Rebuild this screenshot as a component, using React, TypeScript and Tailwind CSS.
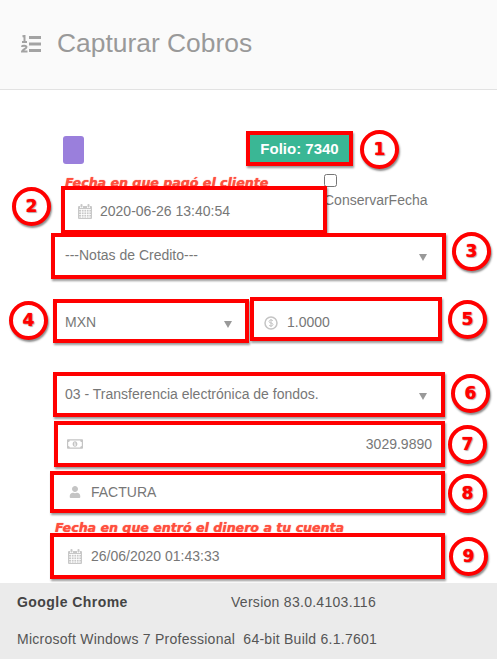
import React from 'react';
import { FaUser, FaRegMoneyBillAlt } from 'react-icons/fa';

const ListOlIcon = () => (
    <svg width="20" height="18" viewBox="0 0 20 18" className="shrink-0 text-[#a3a3a3]" fill="none" stroke="currentColor">
        <path d="M8 2.500h12M8 9h12M8 15.500h12" strokeWidth="3" />
        <path d="M1.500 1.500 3.500 .8v6M1 7h5" strokeWidth="2" />
        <path d="M.8 11.800c.3-1.500 4.700-1.500 4.700.3 0 1.700-4.500 2.300-4.500 4.400h5.500" strokeWidth="2" />
    </svg>
);

const CalendarIcon = () => (
    <svg width="14" height="15" viewBox="0 0 14 15" className="shrink-0 text-[#c8c8c8]" fill="currentColor">
        <rect x="2.500" y="0" width="2" height="3.500" rx="0.800" />
        <rect x="9.500" y="0" width="2" height="3.500" rx="0.800" />
        <path d="M1 2h1v2h3V2h4v2h3V2h1a1 1 0 0 1 1 1v11a1 1 0 0 1-1 1H1a1 1 0 0 1-1-1V3a1 1 0 0 1 1-1z" />
        <path d="M1 5.500h12M1 8h12M1 10.500h12M1 13h12M3.500 5v9M6 5v9M8.500 5v9M11 5v9" stroke="#fff" strokeWidth="0.800" fill="none" />
    </svg>
);

const DollarIcon = () => (
    <svg width="14" height="14" viewBox="0 0 14 14" className="shrink-0 text-[#c4c4c4]" fill="none" stroke="currentColor">
        <circle cx="7" cy="7" r="6" strokeWidth="1.500" />
        <path d="M9 5c-.4-.8-1.100-1-2-1-1.200 0-2 .6-2 1.500C5 7.800 9 6.200 9 8.500 9 9.400 8.200 10 7 10c-.9 0-1.700-.3-2-1M7 3v8" strokeWidth="1" />
    </svg>
);

const Arrow = () => <span className="ml-auto mt-[3px] h-0 w-0 border-x-[4px] border-t-[7px] border-x-transparent border-t-[#999]" />;

const Badge = ({ n, className }: { n: number; className: string }) => (
    <span className={`absolute flex h-[39px] w-[39px] items-center justify-center rounded-full border-[4px] border-[#ff0000] bg-white font-['DejaVu_Sans',sans-serif] text-[17px] font-bold text-[#ff0000] shadow-[1px_2px_2px_rgba(0,0,0,0.45)] [text-shadow:0_0_1px_#ff0000,1px_1px_1px_rgba(0,0,0,0.3)] ${className}`}>
        {n}
    </span>
);

const Box = ({ className, children }: { className: string; children?: React.ReactNode }) => (
    <div className={`relative flex items-center border-[4px] border-[#ff0000] bg-white text-[14px] text-[#777] shadow-[1px_2px_2px_rgba(0,0,0,0.4)] ${className}`}>
        {children}
    </div>
);

const RedNote = ({ children, className }: { children: React.ReactNode; className: string }) => (
    <p className={`whitespace-nowrap font-['DejaVu_Sans',sans-serif] text-[12.600px] font-bold italic leading-[13px] text-[#ff4f3f] [text-shadow:0_0_1px_#ff4f3f] ${className}`}>{children}</p>
);

export default function App() {
    return (
        <div className="h-[659px] w-[497px] overflow-hidden bg-white font-['Liberation_Sans',sans-serif]">
            <header className="flex h-[90px] items-center border-b border-[#e2e2e2] bg-[#fafafa] pb-[2px] pl-[21px]">
                <ListOlIcon />
                <h1 className="ml-[16px] text-[26.400px] text-[#999]">Capturar Cobros</h1>
            </header>

            <div className="mt-[41px] flex pl-[63px]">
                <span className="mt-[5px] h-[28px] w-[21px] rounded-[3px] bg-[#9a7fdc]" />
                <Box className="ml-[162px] h-[35px] w-[107px] justify-center !bg-[#3ab795] pt-[2px]">
                    <span className="text-[15px] font-bold text-white">Folio: 7340</span>
                    <Badge n={1} className="left-[110px] top-[-5px]" />
                </Box>
            </div>

            <div className="flex items-start">
                <div className="ml-[61px] w-[266px]">
                    <RedNote className="mt-[10px] ml-[4px] h-[10px]">Fecha en que pagó el cliente</RedNote>
                    <Box className="h-[48px] pl-[13px] pt-[3px]">
                        <CalendarIcon />
                        <span className="ml-[8px]">2020-06-26 13:40:54</span>
                        <Badge n={2} className="left-[-53px] top-[-3px]" />
                    </Box>
                </div>
                <div className="ml-[-3px] mt-[8px] text-[14px] text-[#777]">
                    <input type="checkbox" className="block h-[13px] w-[13px]" />
                    <span className="mt-[3px] block">ConservarFecha</span>
                </div>
            </div>

            <Box className="ml-[51px] mt-[-1px] h-[46px] w-[395px] pb-[1px] pl-[10px] pr-[15px]">
                <span>---Notas de Credito---</span>
                <Arrow />
                <Badge n={3} className="left-[397px] top-[-5px]" />
            </Box>

            <div className="mt-[18px] flex items-start pl-[53px]">
                <Box className="mt-[2px] h-[44px] w-[196px] pl-[8px] pr-[13px] pt-[3px]">
                    <span>MXN</span>
                    <Arrow />
                    <Badge n={4} className="left-[-48px] top-[-2px]" />
                </Box>
                <Box className="ml-[1px] h-[44px] w-[192px] pl-[10px] pt-[7px]">
                    <DollarIcon />
                    <span className="ml-[9px]">1.0000</span>
                    <Badge n={5} className="left-[194px] top-[-1px]" />
                </Box>
            </div>

            <Box className="ml-[53px] mt-[29px] h-[45px] w-[392px] pl-[8px] pr-[14px]">
                <span>03 - Transferencia electrónica de fondos.</span>
                <Arrow />
                <Badge n={6} className="left-[394px] top-[-2px]" />
            </Box>

            <Box className="ml-[54px] mt-[4px] h-[46px] w-[391px] pl-[9px] pr-[9px]">
                <FaRegMoneyBillAlt size={16} className="text-[#c4c4c4]" />
                <span className="ml-auto">3029.9890</span>
                <Badge n={7} className="left-[390px] top-[0px]" />
            </Box>

            <Box className="ml-[50px] mt-[4px] h-[42px] w-[395px] pl-[15px]">
                <FaUser size={12} className="text-[#c4c4c4]" />
                <span className="ml-[10px]">FACTURA</span>
                <Badge n={8} className="left-[394px] top-[-1px]" />
            </Box>

            <RedNote className="ml-[55px] mt-[8px] h-[12px]">Fecha en que entró el dinero a tu cuenta</RedNote>

            <Box className="ml-[50px] h-[46px] w-[395px] pl-[14px]">
                <CalendarIcon />
                <span className="ml-[9px]">26/06/2020 01:43:33</span>
                <Badge n={9} className="left-[395px] top-[0px]" />
            </Box>

            <footer className="mt-[4px] h-[76px] bg-[#ebebeb] pl-[17px] text-[14px] text-[#555]">
                <div className="flex pt-[11px] leading-[16px]">
                    <span className="w-[214px] font-bold tracking-[0.450px] text-[#444]">Google Chrome</span>
                    <span className="tracking-[0.280px]">Version 83.0.4103.116</span>
                </div>
                <p className="mt-[21px] whitespace-pre leading-[16px] tracking-[0.250px]">Microsoft Windows 7 Professional  64-bit Build 6.1.7601</p>
            </footer>
        </div>
    );
}
